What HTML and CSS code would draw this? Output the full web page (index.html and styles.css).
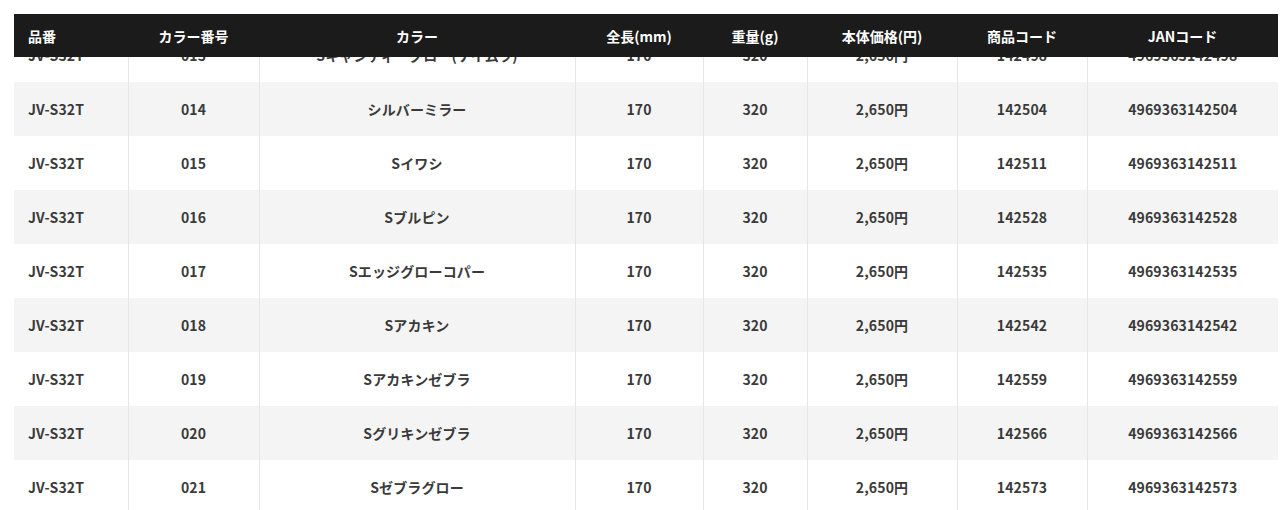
FILE: index.html
```
<!DOCTYPE html>
<html lang="ja">
<head>
<meta charset="utf-8">
<title>JV-S32T</title>
<link rel="stylesheet" href="styles.css">
</head>
<body>
<div class="wrap">
  <table class="spec head">
    <colgroup>
      <col class="c1"><col class="c2"><col class="c3"><col class="c4"><col class="c5"><col class="c6"><col class="c7"><col class="c8">
    </colgroup>
    <thead>
      <tr><th class="left">品番</th><th>カラー番号</th><th>カラー</th><th>全長(mm)</th><th>重量(g)</th><th>本体価格(円)</th><th>商品コード</th><th>JANコード</th></tr>
    </thead>
  </table>
  <table class="spec body">
    <colgroup>
      <col class="c1"><col class="c2"><col class="c3"><col class="c4"><col class="c5"><col class="c6"><col class="c7"><col class="c8">
    </colgroup>
    <tbody>
      <tr><td class="left">JV-S32T</td><td>013</td><td>Sキャンディーグロー(ケイムラ)</td><td>170</td><td>320</td><td>2,650円</td><td>142498</td><td>4969363142498</td></tr>
      <tr class="alt"><td class="left">JV-S32T</td><td>014</td><td>シルバーミラー</td><td>170</td><td>320</td><td>2,650円</td><td>142504</td><td>4969363142504</td></tr>
      <tr><td class="left">JV-S32T</td><td>015</td><td>Sイワシ</td><td>170</td><td>320</td><td>2,650円</td><td>142511</td><td>4969363142511</td></tr>
      <tr class="alt"><td class="left">JV-S32T</td><td>016</td><td>Sブルピン</td><td>170</td><td>320</td><td>2,650円</td><td>142528</td><td>4969363142528</td></tr>
      <tr><td class="left">JV-S32T</td><td>017</td><td>Sエッジグローコパー</td><td>170</td><td>320</td><td>2,650円</td><td>142535</td><td>4969363142535</td></tr>
      <tr class="alt"><td class="left">JV-S32T</td><td>018</td><td>Sアカキン</td><td>170</td><td>320</td><td>2,650円</td><td>142542</td><td>4969363142542</td></tr>
      <tr><td class="left">JV-S32T</td><td>019</td><td>Sアカキンゼブラ</td><td>170</td><td>320</td><td>2,650円</td><td>142559</td><td>4969363142559</td></tr>
      <tr class="alt"><td class="left">JV-S32T</td><td>020</td><td>Sグリキンゼブラ</td><td>170</td><td>320</td><td>2,650円</td><td>142566</td><td>4969363142566</td></tr>
      <tr><td class="left">JV-S32T</td><td>021</td><td>Sゼブラグロー</td><td>170</td><td>320</td><td>2,650円</td><td>142573</td><td>4969363142573</td></tr>
    </tbody>
  </table>
</div>
</body>
</html>
```
FILE: styles.css
```
html, body {
  margin: 0;
  padding: 0;
  background: #fff;
  overflow: hidden;
  height: 510px;
}
body {
  font-family: "Noto Sans CJK JP", "Noto Sans", sans-serif;
  color: #3a3a3a;
}
.wrap {
  position: relative;
  padding: 28px 2px 0 14px;
}
.spec {
  width: 1264px;
  border-collapse: collapse;
  table-layout: fixed;
}
.c1 { width: 114px; }
.c2 { width: 131px; }
.c3 { width: 316px; }
.c4 { width: 128px; }
.c5 { width: 104px; }
.c6 { width: 150px; }
.c7 { width: 130px; }
.c8 { width: 191px; }

.head {
  position: absolute;
  top: 14px;
  left: 14px;
  z-index: 2;
  background: #1b1b1b;
}
.head th {
  height: 43px;
  padding: 0;
  color: #fff;
  font-size: 14px;
  font-weight: 700;
  text-align: center;
}
.head th.left,
.body td.left {
  text-align: left;
  padding-left: 14px;
}
.body td {
  height: 54px;
  padding: 0;
  font-size: 14px;
  font-weight: 700;
  letter-spacing: 0.01em;
  text-align: center;
  border-left: 1px solid #e6e6e6;
  white-space: nowrap;
}
.body td:first-child {
  border-left: none;
}
.body tr.alt td {
  background: #f4f4f4;
}
```
